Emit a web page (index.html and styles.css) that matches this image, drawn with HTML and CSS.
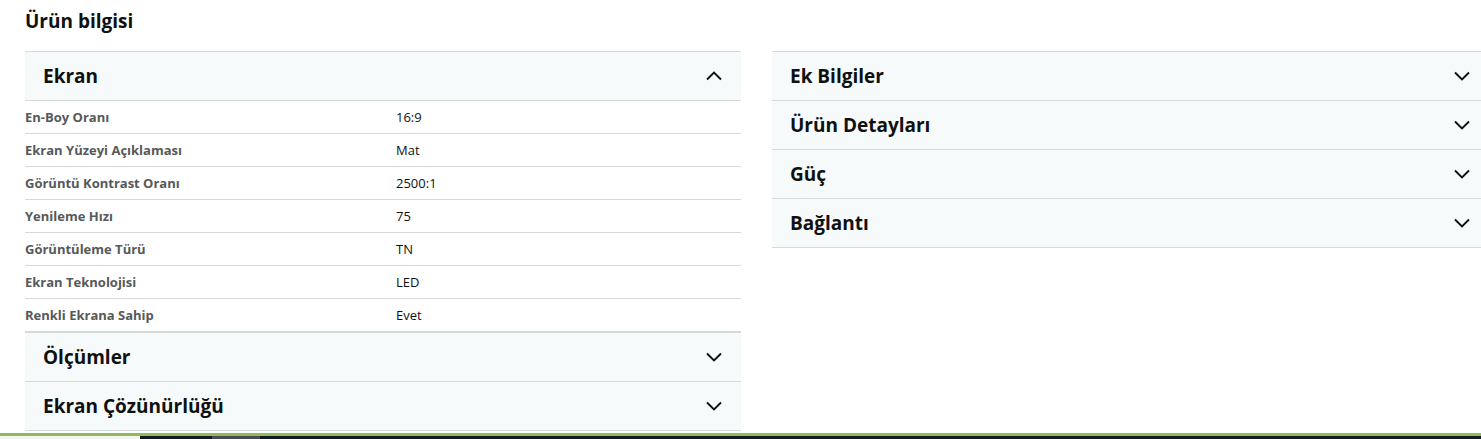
FILE: index.html
```html
<!DOCTYPE html>
<html lang="tr">
<head>
<meta charset="utf-8">
<title>Ürün bilgisi</title>
<link rel="stylesheet" href="styles.css">
</head>
<body>
<div class="page">
  <h2 class="title">Ürün bilgisi</h2>
  <div class="cols">
    <div class="col">
      <section class="acc">
        <div class="acc-head"><span>Ekran</span>
          <svg class="chev" viewBox="0 0 16 16"><path d="M1 11.5 L8 4.5 L15 11.5"/></svg>
        </div>
        <table class="spec">
          <tr><th>En-Boy Oranı</th><td>16:9</td></tr>
          <tr><th>Ekran Yüzeyi Açıklaması</th><td>Mat</td></tr>
          <tr><th>Görüntü Kontrast Oranı</th><td>2500:1</td></tr>
          <tr><th>Yenileme Hızı</th><td>75</td></tr>
          <tr><th>Görüntüleme Türü</th><td>TN</td></tr>
          <tr><th>Ekran Teknolojisi</th><td>LED</td></tr>
          <tr><th>Renkli Ekrana Sahip</th><td>Evet</td></tr>
        </table>
      </section>
      <section class="acc">
        <div class="acc-head"><span>Ölçümler</span>
          <svg class="chev" viewBox="0 0 16 16"><path d="M1 4.5 L8 11.5 L15 4.5"/></svg>
        </div>
      </section>
      <section class="acc last">
        <div class="acc-head"><span>Ekran Çözünürlüğü</span>
          <svg class="chev" viewBox="0 0 16 16"><path d="M1 4.5 L8 11.5 L15 4.5"/></svg>
        </div>
      </section>
    </div>
    <div class="col">
      <section class="acc">
        <div class="acc-head"><span>Ek Bilgiler</span>
          <svg class="chev" viewBox="0 0 16 16"><path d="M1 4.5 L8 11.5 L15 4.5"/></svg>
        </div>
      </section>
      <section class="acc">
        <div class="acc-head"><span>Ürün Detayları</span>
          <svg class="chev" viewBox="0 0 16 16"><path d="M1 4.5 L8 11.5 L15 4.5"/></svg>
        </div>
      </section>
      <section class="acc">
        <div class="acc-head"><span>Güç</span>
          <svg class="chev" viewBox="0 0 16 16"><path d="M1 4.5 L8 11.5 L15 4.5"/></svg>
        </div>
      </section>
      <section class="acc last">
        <div class="acc-head"><span>Bağlantı</span>
          <svg class="chev" viewBox="0 0 16 16"><path d="M1 4.5 L8 11.5 L15 4.5"/></svg>
        </div>
      </section>
    </div>
  </div>
  <div class="strip">
    <div class="strip-light"></div>
    <div class="strip-dark"><div class="strip-gray"></div></div>
  </div>
</div>
</body>
</html>
```
FILE: styles.css
```css
html, body {
  margin: 0;
  padding: 0;
  background: #fff;
  overflow: hidden;
}
body {
  font-family: "Open Sans", "Liberation Sans", sans-serif;
  color: #0f1111;
}
.page {
  width: 1514px;
}
.title {
  margin: 9px 0 18px 25px;
  font-size: 19px;
  line-height: 24px;
  font-weight: 700;
}
.cols {
  display: grid;
  grid-template-columns: 716px 717px;
  column-gap: 31px;
  padding-left: 25px;
  align-items: start;
}
.acc {
  border-top: 1px solid #d5d9d9;
}
.acc.last {
  border-bottom: 1px solid #d5d9d9;
}
.acc-head {
  height: 48px;
  background: #f7fafa;
  display: flex;
  align-items: center;
  justify-content: space-between;
  padding: 0 19px 0 18px;
  font-size: 19px;
  font-weight: 700;
}
.acc-head span {
  margin-top: -1px;
}
.chev {
  width: 16px;
  height: 16px;
  fill: none;
  stroke: #0f1111;
  stroke-width: 1.9;
}
.spec {
  width: 100%;
  border-collapse: collapse;
  border-bottom: 1px solid #d5d9d9;
  font-size: 13px;
}
.spec tr {
  border-top: 1px solid #d5d9d9;
  height: 33px;
}
.spec th {
  width: 371px;
  padding: 0;
  text-align: left;
  font-weight: 700;
  color: #565959;
}
.spec td {
  padding: 0;
  color: #0f1111;
}
.strip {
  margin-top: 2px;
  border-top: 3px solid #8fbd55;
  height: 6px;
  display: flex;
}
.strip-light {
  width: 140px;
  background: #f3f3f3;
}
.strip-dark {
  flex: 1;
  background: #131a22;
  padding-left: 72px;
}
.strip-gray {
  width: 48px;
  height: 100%;
  background: #4a4d50;
}
```
